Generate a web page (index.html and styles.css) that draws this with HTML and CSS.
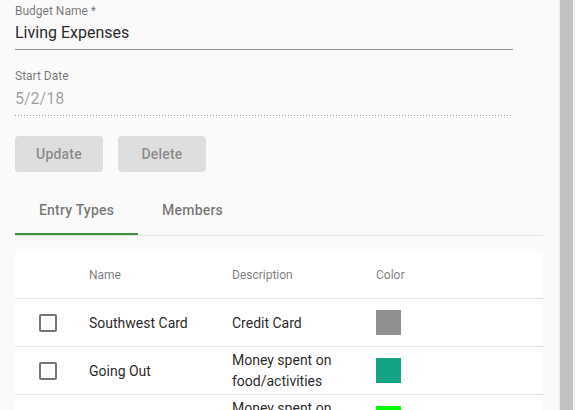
FILE: index.html
```html
<!DOCTYPE html>
<html>
<head>
<meta charset="utf-8">
<link rel="stylesheet" href="styles.css">
</head>
<body>
<div class="page">
  <main class="main">
    <div class="field">
      <div class="label">Budget Name *</div>
      <div class="value">Living Expenses</div>
    </div>
    <div class="field field-date">
      <div class="label">Start Date</div>
      <div class="value disabled">5/2/18</div>
    </div>
    <div class="buttons">
      <button class="btn">Update</button>
      <button class="btn">Delete</button>
    </div>
    <div class="tabs">
      <div class="tab active">Entry Types</div>
      <div class="tab">Members</div>
    </div>
    <div class="card">
      <div class="row head">
        <div class="cell"></div>
        <div class="cell">Name</div>
        <div class="cell">Description</div>
        <div class="cell">Color</div>
      </div>
      <div class="row">
        <div class="cell"><span class="check"></span></div>
        <div class="cell">Southwest Card</div>
        <div class="cell">Credit Card</div>
        <div class="cell"><span class="swatch swatch-gray"></span></div>
      </div>
      <div class="row">
        <div class="cell"><span class="check"></span></div>
        <div class="cell">Going Out</div>
        <div class="cell desc">Money spent on food/activities</div>
        <div class="cell"><span class="swatch swatch-teal"></span></div>
      </div>
      <div class="row">
        <div class="cell"><span class="check"></span></div>
        <div class="cell">Groceries</div>
        <div class="cell desc">Money spent on groceries</div>
        <div class="cell"><span class="swatch swatch-lime"></span></div>
      </div>
    </div>
  </main>
  <div class="scrollbar"><div class="thumb"></div></div>
</div>
</body>
</html>
```
FILE: styles.css
```css
html, body {
  margin: 0;
  padding: 0;
  height: 410px;
  overflow: hidden;
  background: #fafafa;
  font-family: Roboto, "Noto Sans", sans-serif;
}
.page {
  display: flex;
  height: 410px;
}
.main {
  flex: 1;
  padding-left: 15px;
  overflow: hidden;
}
.scrollbar {
  width: 17px;
  background: #f1f1f1;
  display: flex;
  padding: 0 2px;
  box-sizing: border-box;
}
.thumb {
  flex: 1;
  background: #c1c1c1;
}
.field {
  width: 498px;
  padding-top: 5px;
}
.field-date {
  padding-top: 20px;
}
.label {
  font-size: 12px;
  line-height: 12px;
  color: rgba(0, 0, 0, 0.54);
}
.value {
  font-size: 16px;
  line-height: 19px;
  color: rgba(0, 0, 0, 0.87);
  padding: 6px 0 7px;
  border-bottom: 1px solid rgba(0, 0, 0, 0.42);
}
.value.disabled {
  padding-top: 7px;
  color: rgba(0, 0, 0, 0.38);
  border-bottom: none;
  background-image: linear-gradient(to right, rgba(0, 0, 0, 0.42) 33%, transparent 0%);
  background-position: left bottom;
  background-size: 3px 1px;
  background-repeat: repeat-x;
  padding-bottom: 8px;
}
.buttons {
  display: flex;
  gap: 15px;
  margin-top: 20px;
}
.btn {
  width: 88px;
  height: 36px;
  border: none;
  border-radius: 4px;
  background: #dedede;
  color: rgba(0, 0, 0, 0.4);
  font-family: Roboto, sans-serif;
  font-size: 14px;
  font-weight: 500;
  letter-spacing: 0.2px;
  padding: 0;
}
.tabs {
  display: flex;
  margin-top: 14px;
  width: 528px;
  height: 49px;
  border-bottom: 1px solid #e0e0e0;
  box-sizing: content-box;
}
.tab {
  position: relative;
  padding: 0 24px;
  font-size: 14px;
  font-weight: 500;
  letter-spacing: 0.2px;
  color: rgba(0, 0, 0, 0.54);
  display: flex;
  align-items: center;
  padding-bottom: 1px;
}
.tab.active::after {
  content: "";
  position: absolute;
  left: 0;
  right: 0;
  bottom: 0;
  height: 2px;
  background: #388e3c;
}
.card {
  margin-top: 15px;
  width: 528px;
  background: #fff;
}
.row {
  display: grid;
  grid-template-columns: 74px 143px 144px 1fr;
  height: 47px;
  border-bottom: 1px solid #e0e0e0;
  font-size: 14px;
  color: rgba(0, 0, 0, 0.87);
}
.row.head {
  font-size: 12px;
  color: rgba(0, 0, 0, 0.54);
}
.cell {
  display: flex;
  align-items: center;
}
.cell:first-child {
  padding-left: 24px;
}
.desc {
  line-height: 21px;
  padding-right: 20px;
}
.check {
  width: 14px;
  height: 14px;
  border: 2px solid rgba(0, 0, 0, 0.54);
  border-radius: 2px;
}
.swatch {
  width: 25px;
  height: 25px;
}
.swatch-gray { background: #909090; }
.swatch-teal { background: #13a486; }
.swatch-lime { background: #00ff00; }
```
